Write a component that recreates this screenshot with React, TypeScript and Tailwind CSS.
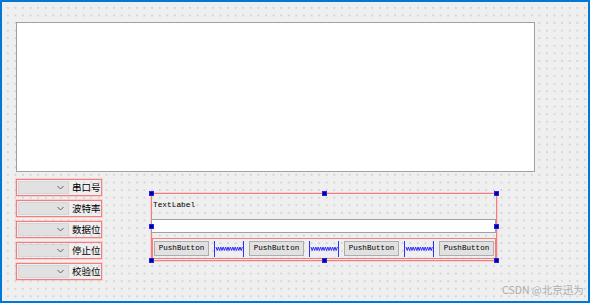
import React from "react";

const ports = ["串口号", "波特率", "数据位", "停止位", "校验位"];

const handles = [
  "left-[-3px] top-[-3px]",
  "left-[170px] top-[-3px]",
  "right-[-3px] top-[-3px]",
  "left-[-3px] top-[30px]",
  "right-[-3px] top-[30px]",
  "left-[-3px] bottom-[-3px]",
  "left-[170px] bottom-[-3px]",
  "right-[-3px] bottom-[-3px]",
];

function Chevron() {
  return (
    <svg width="7" height="5" viewBox="0 0 7 5" aria-hidden>
      <polyline points="0.5,1 3.5,4 6.5,1" fill="none" stroke="#606060" strokeWidth="1" />
    </svg>
  );
}

function Spacer() {
  const pts: string[] = [];
  for (let i = 0; i <= 22; i++) {
    pts.push(`${2 + i * 1.2},${i % 2 === 0 ? 6 : 9.5}`);
  }
  return (
    <svg width="30" height="16" viewBox="0 0 30 16" aria-hidden className="shrink-0">
      <line x1="0.5" y1="0" x2="0.5" y2="16" stroke="#3030ff" strokeWidth="1" />
      <line x1="29.5" y1="0" x2="29.5" y2="16" stroke="#3030ff" strokeWidth="1" />
      <polyline points={pts.join(" ")} fill="none" stroke="#2f2fff" strokeWidth="1" />
    </svg>
  );
}

function PushButton() {
  return (
    <div className="flex h-[15px] w-[55px] shrink-0 items-center justify-center border border-[#adadad] bg-[#e1e1e1] font-['Liberation_Mono',monospace] text-[7.6px] text-black">
      PushButton
    </div>
  );
}

export default function App() {
  return (
    <div className="relative h-[303px] w-[590px] overflow-hidden border-2 border-[#0078d7] bg-[#efefef] bg-[radial-gradient(circle,#c6c6c6_0.6px,transparent_0.8px)] bg-[size:7.6px_7.6px] bg-[position:2px_2px] pl-[14px] pt-[20px]">
      <div className="h-[150px] w-[519px] border border-[#a0a0a0] bg-white" />

      <div className="mt-[7px] flex items-start">
        <div className="flex w-[86px] flex-col gap-[4px]">
          {ports.map((label) => (
            <div
              key={label}
              className="flex h-[17px] items-center border border-[#f08080] shadow-[0_0_0_1px_rgba(255,170,170,0.45)] pl-px"
            >
              <div className="flex h-[13px] w-[51px] items-center justify-end border border-[#d6d6d6] bg-[#e1e1e1] pr-[4px]">
                <Chevron />
              </div>
              <span className="ml-[3px] font-['Noto_Sans_CJK_SC',sans-serif] text-[9.5px] leading-none text-black">
                {label}
              </span>
            </div>
          ))}
        </div>

        <div className="relative ml-[49px] mt-[14px] h-[68px] w-[346px] border border-[#f08080] shadow-[0_0_0_1px_rgba(255,170,170,0.45)]">
          <div className="flex h-full flex-col">
            <div className="h-[25px] pl-px pt-[7px] font-['Liberation_Mono',monospace] text-[7.8px] leading-[9px] text-black">
              TextLabel
            </div>
            <div className="-ml-px h-[14px] border border-[#a0a0a0] bg-white" />
            <div className="mt-[5px] flex h-[21px] items-center justify-between border border-[#f08080] px-px">
              <PushButton />
              <Spacer />
              <PushButton />
              <Spacer />
              <PushButton />
              <Spacer />
              <PushButton />
            </div>
          </div>
          {handles.map((pos) => (
            <div key={pos} className={`absolute h-[5px] w-[5px] border border-[#2020ff] bg-[#000080] ${pos}`} />
          ))}
        </div>
      </div>

      <span className="absolute left-[500px] top-[283px] font-['Noto_Sans_CJK_SC',sans-serif] text-[10.5px] leading-none text-[#adadad]">
        CSDN @北京迅为
      </span>
    </div>
  );
}
